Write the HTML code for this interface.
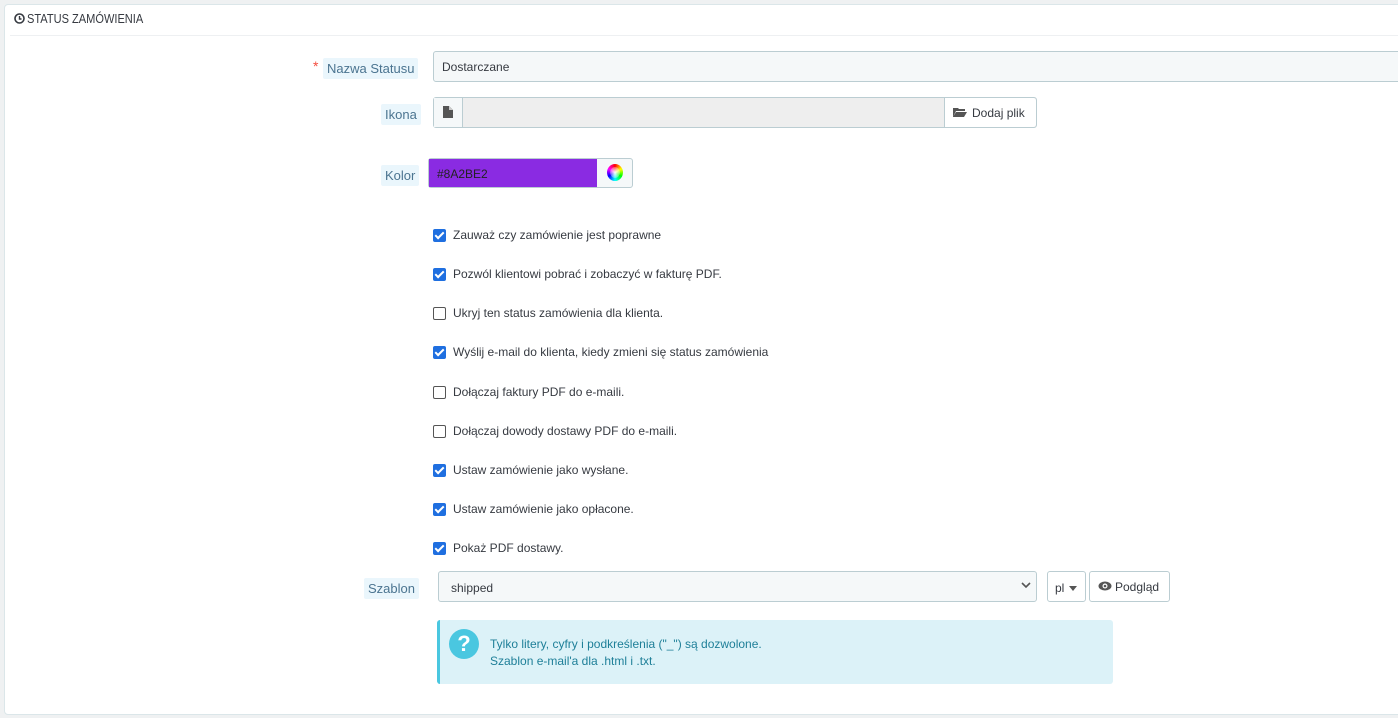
<!DOCTYPE html>
<html><head><meta charset="utf-8"><style>
body{margin:0;background:#eff1f2;font-family:"Liberation Sans",sans-serif;font-size:12px;color:#363a41;width:1398px;height:718px;overflow:hidden;position:relative}
.panel{position:absolute;left:4px;top:4px;width:1410px;height:711px;background:#fff;border:1px solid #dbe6e9;border-radius:4px;box-sizing:border-box}
.abs{position:absolute}
.hd{left:27px;top:11px;font-size:13px;color:#363a41;transform:scaleX(.85);transform-origin:left}
.hr{left:10px;top:35px;width:1400px;height:1px;background:#eef0f2}
.lbl{background:#eaf6fc;color:#4b7490;padding:3px 4px;border-radius:2px;font-size:13px}
.inp{background:#f5f8f9;border:1px solid #bbcdd2;border-radius:3px;box-sizing:border-box}
.cb{position:absolute;left:433px;width:13px;height:13px;border-radius:2px;box-sizing:border-box}
.on{background:#1f6fe0}
.on:after{content:"";position:absolute;left:4px;top:1px;width:3px;height:7px;border:solid #fff;border-width:0 2px 2px 0;transform:rotate(45deg)}
.off{border:1px solid #555;background:#fff}
.ct{position:absolute;left:453px;font-size:12px;color:#363a41}
</style></head><body>
<div class="panel"></div>
<svg class="abs" style="left:14px;top:13px" width="11" height="11"><circle cx="5.5" cy="5.5" r="4.5" fill="none" stroke="#363a41" stroke-width="1.6"/><path d="M5.5 3v3h2" stroke="#363a41" stroke-width="1.4" fill="none"/></svg>
<div class="abs hd">STATUS ZAMÓWIENIA</div>
<div class="abs hr"></div>

<div class="abs" style="left:313px;top:58px;color:#f54c3e;font-size:14px">*</div>
<div class="abs lbl" style="left:323px;top:58px">Nazwa Statusu</div>
<div class="abs inp" style="left:433px;top:51px;width:980px;height:31px"></div>
<div class="abs" style="left:442px;top:60px;font-size:12px">Dostarczane</div>

<div class="abs lbl" style="left:381px;top:104px">Ikona</div>
<div class="abs inp" style="left:433px;top:97px;width:604px;height:31px;background:#eee"></div>
<div class="abs" style="left:434px;top:98px;width:28px;height:29px;background:#f5f8f9;border-right:1px solid #bbcdd2"></div>
<svg class="abs" style="left:443px;top:106px" width="10" height="12"><path d="M0 0h6l4 4v8H0z" fill="#555"/><path d="M6 0v4h4" fill="#ccc"/></svg>
<div class="abs" style="left:944px;top:98px;width:91px;height:29px;background:#fff;border-left:1px solid #bbcdd2;border-radius:0 3px 3px 0"></div>
<svg class="abs" style="left:953px;top:107px" width="14" height="10"><path d="M0 1h5l1 1h6v2H3L0 10z M3 5h11l-3 5H0z" fill="#555"/></svg>
<div class="abs" style="left:972px;top:106px">Dodaj plik</div>

<div class="abs lbl" style="left:381px;top:165px">Kolor</div>
<div class="abs" style="left:428px;top:158px;width:205px;height:30px;border:1px solid #bbcdd2;border-radius:3px;box-sizing:border-box;background:#f5f8f9"></div>
<div class="abs" style="left:429px;top:159px;width:168px;height:28px;background:#8a2be2"></div>
<div class="abs" style="left:437px;top:167px;color:#222">#8A2BE2</div>
<div class="abs" style="left:607px;top:164px;width:16px;height:17px;border-radius:50%;background:conic-gradient(red,yellow,lime,cyan,blue,magenta,red)"></div>
<div class="abs" style="left:610px;top:167px;width:10px;height:11px;border-radius:50%;background:radial-gradient(#fff,rgba(255,255,255,0))"></div>

<div class="cb on" style="top:229px"></div><div class="ct" style="top:228px">Zauważ czy zamówienie jest poprawne</div>
<div class="cb on" style="top:268px"></div><div class="ct" style="top:267px">Pozwól klientowi pobrać i zobaczyć w fakturę PDF.</div>
<div class="cb off" style="top:307px"></div><div class="ct" style="top:306px">Ukryj ten status zamówienia dla klienta.</div>
<div class="cb on" style="top:346px"></div><div class="ct" style="top:345px">Wyślij e-mail do klienta, kiedy zmieni się status zamówienia</div>
<div class="cb off" style="top:386px"></div><div class="ct" style="top:385px">Dołączaj faktury PDF do e-maili.</div>
<div class="cb off" style="top:425px"></div><div class="ct" style="top:424px">Dołączaj dowody dostawy PDF do e-maili.</div>
<div class="cb on" style="top:464px"></div><div class="ct" style="top:463px">Ustaw zamówienie jako wysłane.</div>
<div class="cb on" style="top:503px"></div><div class="ct" style="top:502px">Ustaw zamówienie jako opłacone.</div>
<div class="cb on" style="top:542px"></div><div class="ct" style="top:541px">Pokaż PDF dostawy.</div>

<div class="abs lbl" style="left:364px;top:578px">Szablon</div>
<div class="abs inp" style="left:438px;top:571px;width:599px;height:31px"></div>
<div class="abs" style="left:451px;top:581px">shipped</div>
<svg class="abs" style="left:1021px;top:582px" width="10" height="8"><path d="M1 1l4 4 4-4" stroke="#555" stroke-width="1.6" fill="none"/></svg>
<div class="abs" style="left:1047px;top:571px;width:39px;height:31px;border:1px solid #bbcdd2;border-radius:3px;box-sizing:border-box;background:#fff"></div>
<div class="abs" style="left:1055px;top:581px">pl</div>
<svg class="abs" style="left:1069px;top:586px" width="8" height="5"><path d="M0 0h8L4 5z" fill="#555"/></svg>
<div class="abs" style="left:1089px;top:571px;width:81px;height:31px;border:1px solid #bbcdd2;border-radius:3px;box-sizing:border-box;background:#fff"></div>
<svg class="abs" style="left:1098px;top:581px" width="14" height="10"><ellipse cx="7" cy="5" rx="6.5" ry="4.5" fill="#555"/><circle cx="7" cy="5" r="2.5" fill="#fff"/><circle cx="7" cy="5" r="1.3" fill="#555"/></svg>
<div class="abs" style="left:1115px;top:580px">Podgląd</div>

<div class="abs" style="left:437px;top:620px;width:676px;height:64px;background:#dcf2f8;border-left:3px solid #4ac7e0;border-radius:3px;box-sizing:border-box"></div>
<div class="abs" style="left:449px;top:629px;width:30px;height:30px;border-radius:50%;background:#4ac7e0;color:#fff;font-weight:bold;font-size:22px;text-align:center;line-height:30px">?</div>
<div class="abs" style="left:490px;top:636px;color:#1e7f98;line-height:17px">Tylko litery, cyfry i podkreślenia ("_") są dozwolone.<br>Szablon e-mail'a dla .html i .txt.</div>
</body></html>
